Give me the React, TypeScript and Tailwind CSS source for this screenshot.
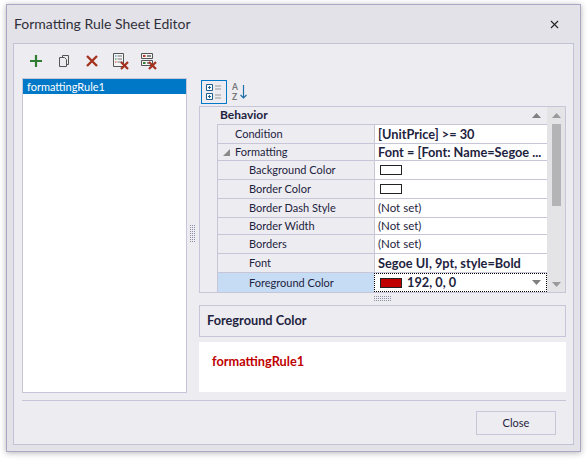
import React from 'react';
import { X } from 'lucide-react';

const FONT = "font-['Lato','Noto_Sans',sans-serif]";
const BOLD = 'font-bold text-[12.75px]';

function Swatch({ color }: { color: string }) {
  return <span className={`block w-[22px] h-[10px] border border-[#222] ${color}`} />;
}

function Grip({ vertical }: { vertical?: boolean }) {
  return (
    <svg width={vertical ? 6 : 18} height={vertical ? 18 : 6}>
      <defs>
        <pattern id={vertical ? 'gv' : 'gh'} width="2" height="2" patternUnits="userSpaceOnUse">
          <rect width="1" height="1" fill="#8f8fa8" />
        </pattern>
      </defs>
      <rect width="100%" height="100%" fill={`url(#${vertical ? 'gv' : 'gh'})`} />
    </svg>
  );
}

function Arrow({ up, color = '#808080' }: { up?: boolean; color?: string }) {
  return (
    <svg width="9" height="5" viewBox="0 0 9 5">
      <path d={up ? 'M4.5 0 L9 5 L0 5 Z' : 'M0 0 L9 0 L4.5 5 Z'} fill={color} />
    </svg>
  );
}

const rows = [
  { name: 'Condition', h: 'h-[19px]', pad: 'pl-[17px]', value: '[UnitPrice] >= 30', bold: true },
  { name: 'Formatting', h: 'h-[17px]', pad: 'pl-[17px]', value: 'Font = [Font: Name=Segoe ...', bold: true, expander: true },
  { name: 'Background Color', h: 'h-[19px]', pad: 'pl-[31px]', swatch: true },
  { name: 'Border Color', h: 'h-[19px]', pad: 'pl-[31px]', swatch: true },
  { name: 'Border Dash Style', h: 'h-[19px]', pad: 'pl-[31px]', value: '(Not set)' },
  { name: 'Border Width', h: 'h-[17px]', pad: 'pl-[31px]', value: '(Not set)' },
  { name: 'Borders', h: 'h-[19px]', pad: 'pl-[31px]', value: '(Not set)' },
  { name: 'Font', h: 'h-[19px]', pad: 'pl-[31px]', value: 'Segoe UI, 9pt, style=Bold', bold: true },
];

export default function App() {
  return (
    <div className={`w-[588px] h-[460px] bg-white pt-[4px] pl-[6px] text-[11px] leading-none text-[#1e2340] ${FONT}`}>
      <div className="w-[575px] h-[448px] border border-[#a9a9c6] bg-[#e3e2e8] shadow-[0_1px_6px_rgba(0,0,0,0.3)] flex flex-col">
        <div className="h-[38px] shrink-0 flex items-center justify-between pl-[7px] pr-[19px]">
          <span className="text-[14px] text-[#30303a] pb-[1px]">Formatting Rule Sheet Editor</span>
          <X size={13} strokeWidth={2} className="text-[#222]" />
        </div>

        <div className="mx-[6px] w-[561px] h-[402px] border border-[#c2c2d6] bg-[#edecf1] flex flex-col pl-[8px]">
          <div className="h-[34px] shrink-0 flex items-center">
            <div className="w-[28px] flex justify-center">
              <svg width="14" height="14" viewBox="0 0 14 14"><path d="M7 1v12M1 7h12" stroke="#2e7d32" strokeWidth="2.2" /></svg>
            </div>
            <div className="w-[28px] flex justify-center">
              <svg width="14" height="14" viewBox="0 0 14 14" fill="#edecf1" stroke="#555" strokeWidth="1">
                <path d="M5.5 1.5h6v9h-6z" />
                <path d="M2.5 3.5h5l2 2v7h-7z" />
              </svg>
            </div>
            <div className="w-[28px] flex justify-center">
              <svg width="14" height="14" viewBox="0 0 14 14"><path d="M2 2l10 10M12 2L2 12" stroke="#a5321e" strokeWidth="2.4" /></svg>
            </div>
            <div className="w-[29px] flex justify-center">
              <svg width="18" height="18" viewBox="0 0 18 18">
                <path d="M1.5 1.5h10v13h-10z" fill="#f4f4f4" stroke="#555" />
                <path d="M3 4h1.5" stroke="#2a7ab8" /><path d="M5.5 4H10M5.5 7H10M5.5 10H10" stroke="#777" />
                <path d="M3 7h1.5" stroke="#2e7d32" /><path d="M3 10h1.5" stroke="#c0392b" />
                <path d="M9 10l7 7M16 10l-7 7" stroke="#a5321e" strokeWidth="2.2" />
              </svg>
            </div>
            <div className="w-[28px] flex justify-center">
              <svg width="18" height="18" viewBox="0 0 18 18">
                <path d="M1.5 1.5h11v5h-11zM1.5 8.5h11v5h-11z" fill="#f4f4f4" stroke="#555" />
                <path d="M3 4h2.5" stroke="#c0392b" strokeWidth="2" /><path d="M3 11h2.5" stroke="#2e7d32" strokeWidth="2" />
                <path d="M7 4h4M7 11h2" stroke="#888" strokeWidth="2" />
                <path d="M9 10l7 7M16 10l-7 7" stroke="#a5321e" strokeWidth="2.2" />
              </svg>
            </div>
          </div>

          <div className="flex h-[315px] shrink-0">
            <div className="w-[165px] border border-[#c6c6d8] bg-white">
              <div className="h-[15px] bg-[#0078c8] text-white flex items-center pl-[4px]">formattingRule1</div>
            </div>
            <div className="w-[12px] flex items-center justify-center pb-[3px]">
              <Grip vertical />
            </div>
            <div className="w-[367px] flex flex-col">
              <div className="h-[28px] shrink-0 flex items-start pt-[2px] pl-[2px] gap-[5px]">
                <div className="w-[26px] h-[24px] border border-[#0078c8] flex flex-col justify-center gap-[2px] pl-[4px]">
                  {[0, 1].map((i) => (
                    <svg key={i} width="16" height="7" viewBox="0 0 16 7">
                      <path d="M.5.5h6v6h-6z" fill="#fff" stroke="#1f5f8f" />
                      <path d="M2 3.5h3M3.5 2v3" stroke="#1f5f8f" />
                      <path d="M9 2h6M9 5h6" stroke="#999" />
                    </svg>
                  ))}
                </div>
                <div className="relative w-[16px] h-[24px] flex flex-col justify-center font-bold text-[8.5px] leading-[10.2px] text-[#777]">
                  <span>A</span>
                  <span>Z</span>
                  <svg className="absolute left-[8px] top-[5px]" width="7" height="14" viewBox="0 0 7 14">
                    <path d="M3.5 0v13M.5 10l3 3 3-3" stroke="#1f6fa8" fill="none" strokeWidth="1.2" />
                  </svg>
                </div>
              </div>

              <div className="w-[367px] h-[187px] shrink-0 border border-[#c6c6d8] flex">
                <div className="w-[347px] flex flex-col">
                  <div className="h-[18px] shrink-0 pl-[17px]">
                    <div className="h-full flex items-center justify-between pl-[3px] pr-[6px] pb-[1px] font-bold text-[12px] border-b border-[#c6c6d8]">
                      <span>Behavior</span>
                      <Arrow up />
                    </div>
                  </div>
                  <div className="pl-[17px] flex flex-col">
                    {rows.map((r) => (
                      <div key={r.name} className={`${r.h} shrink-0 flex border-b border-l border-[#c6c6d8]`}>
                        <div className={`relative w-[156px] flex items-center pb-[1px] ${r.pad}`}>
                          {r.expander && (
                            <svg className="absolute left-[5px] top-[5px]" width="7" height="7" viewBox="0 0 7 7">
                              <path d="M7 0v7H0z" fill="#8a8a8a" />
                            </svg>
                          )}
                          {r.name}
                        </div>
                        <div className={`flex-1 min-w-0 whitespace-nowrap overflow-hidden bg-white border-l border-[#c6c6d8] flex items-center ${r.swatch ? 'pl-[5px]' : 'pl-[3px]'} ${r.bold ? BOLD : 'text-[11.5px]'}`}>
                          {r.swatch ? <Swatch color="bg-white" /> : r.value}
                        </div>
                      </div>
                    ))}
                    <div className="h-[19px] shrink-0 flex border-l border-[#c6c6d8]">
                      <div className="w-[156px] bg-[#c6dcf4] flex items-center pb-[1px] pl-[31px]">Foreground Color</div>
                      <div className={`flex-1 bg-white border border-dotted border-black flex items-center pl-[5px] pr-[5px] gap-[5px] ${BOLD}`}>
                        <Swatch color="bg-[#c00000]" />
                        <span className="flex-1">192, 0, 0</span>
                        <Arrow />
                      </div>
                    </div>
                  </div>
                </div>
                <div className="flex-1 bg-[#e4e4e6] flex flex-col items-center pt-[6px] pb-[5px]">
                  <Arrow up color="#9a9a9a" />
                  <div className="mt-[6px] w-[9px] flex-1">
                    <div className="h-[82px] bg-[#b4b4b6]" />
                  </div>
                  <Arrow color="#9a9a9a" />
                </div>
              </div>

              <div className="h-[12px] shrink-0 flex items-center justify-center">
                <Grip />
              </div>
              <div className={`h-[32px] shrink-0 border border-[#c6c6d8] flex items-center pl-[7px] pb-[1px] ${BOLD}`}>
                Foreground Color
              </div>
              <div className={`h-[50px] mt-[5px] shrink-0 bg-white flex items-center pl-[13px] pb-[11px] text-[#c00000] ${BOLD}`}>
                formattingRule1
              </div>
            </div>
          </div>

          <div className="mt-[7px] w-[544px] border-t border-[#c6c6d8] flex justify-end pt-[10px] pr-[10px]">
            <div className="w-[80px] h-[24px] border border-[#c6c6d8] flex items-center justify-center pb-[2px]">Close</div>
          </div>
        </div>
      </div>
    </div>
  );
}
